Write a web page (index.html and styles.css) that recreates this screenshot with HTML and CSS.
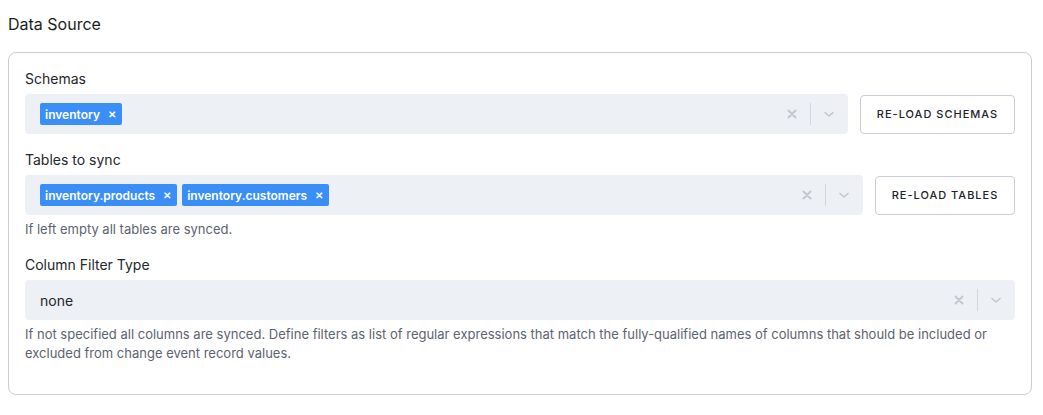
FILE: index.html
```html
<!DOCTYPE html>
<html>
<head>
<meta charset="utf-8">
<link rel="stylesheet" href="styles.css">
</head>
<body>
<div class="page">
  <h2 class="title">Data Source</h2>
  <div class="card">
    <div class="field">
      <div class="label">Schemas</div>
      <div class="row">
        <div class="select">
          <div class="values">
            <span class="tag">inventory<span class="tag-x">&#x2715;</span></span>
          </div>
          <div class="indicators">
            <span class="ind"><svg width="10" height="10" viewBox="0 0 10 10"><path d="M1.5 1.5 L8.5 8.5 M8.5 1.5 L1.5 8.5" stroke="currentColor" stroke-width="2" stroke-linecap="round"/></svg></span>
            <span class="sep"></span>
            <span class="ind"><svg width="12" height="8" viewBox="0 0 12 8"><path d="M2 2.5 L6 6 L10 2.5" stroke="currentColor" stroke-width="1.6" fill="none" stroke-linecap="round" stroke-linejoin="round"/></svg></span>
          </div>
        </div>
        <button class="btn btn-schemas">RE-LOAD SCHEMAS</button>
      </div>
    </div>
    <div class="field">
      <div class="label">Tables to sync</div>
      <div class="row">
        <div class="select">
          <div class="values">
            <span class="tag">inventory.products<span class="tag-x">&#x2715;</span></span>
            <span class="tag">inventory.customers<span class="tag-x">&#x2715;</span></span>
          </div>
          <div class="indicators">
            <span class="ind"><svg width="10" height="10" viewBox="0 0 10 10"><path d="M1.5 1.5 L8.5 8.5 M8.5 1.5 L1.5 8.5" stroke="currentColor" stroke-width="2" stroke-linecap="round"/></svg></span>
            <span class="sep"></span>
            <span class="ind"><svg width="12" height="8" viewBox="0 0 12 8"><path d="M2 2.5 L6 6 L10 2.5" stroke="currentColor" stroke-width="1.6" fill="none" stroke-linecap="round" stroke-linejoin="round"/></svg></span>
          </div>
        </div>
        <button class="btn btn-tables">RE-LOAD TABLES</button>
      </div>
      <div class="help">If left empty all tables are synced.</div>
    </div>
    <div class="field">
      <div class="label">Column Filter Type</div>
      <div class="select">
        <div class="values">
          <span class="value">none</span>
        </div>
        <div class="indicators">
          <span class="ind"><svg width="10" height="10" viewBox="0 0 10 10"><path d="M1.5 1.5 L8.5 8.5 M8.5 1.5 L1.5 8.5" stroke="currentColor" stroke-width="2" stroke-linecap="round"/></svg></span>
          <span class="sep"></span>
          <span class="ind"><svg width="12" height="8" viewBox="0 0 12 8"><path d="M2 2.5 L6 6 L10 2.5" stroke="currentColor" stroke-width="1.6" fill="none" stroke-linecap="round" stroke-linejoin="round"/></svg></span>
        </div>
      </div>
      <div class="help">If not specified all columns are synced. Define filters as list of regular expressions that match the fully-qualified names of columns that should be included or excluded from change event record values.</div>
    </div>
  </div>
</div>
</body>
</html>
```
FILE: styles.css
```css
* { box-sizing: border-box; }
html, body { margin: 0; padding: 0; background: #ffffff; }
body {
  font-family: Inter, "Noto Sans", sans-serif;
  color: #1f2328;
}
.page {
  padding: 12px 11px 0 8px;
}
.title {
  margin: 0 0 16px 0;
  font-size: 16px;
  font-weight: 400;
  line-height: 24px;
  color: #1a1d21;
}
.card {
  border: 1px solid #c9cdd8;
  border-radius: 8px;
  padding: 16px 16px 16px 16px;
  height: 343px;
}
.field {
  margin-bottom: 16px;
}
.label {
  font-size: 14px;
  line-height: 20px;
  margin-bottom: 5px;
  color: #23262b;
}
.row {
  display: flex;
  gap: 12px;
  align-items: center;
}
.select {
  flex: 1;
  height: 40px;
  background: #edf0f4;
  border-radius: 4px;
  display: flex;
  align-items: center;
  padding-left: 15px;
  padding-right: 1px;
}
.values {
  flex: 1;
  display: flex;
  gap: 5px;
  align-items: center;
}
.tag {
  display: inline-flex;
  align-items: center;
  height: 22px;
  padding: 0 6px 0 5px;
  background: #3a8ef7;
  color: #ffffff;
  font-size: 12px;
  font-weight: 600;
  border-radius: 2px;
}
.tag-x {
  font-size: 10px;
  font-weight: 700;
  margin-left: 8px;
}
.value {
  font-size: 14px;
  color: #23262b;
}
.indicators {
  display: flex;
  align-items: center;
}
.ind {
  width: 36px;
  height: 24px;
  display: flex;
  align-items: center;
  justify-content: center;
  color: #c4c7cd;
}
.sep {
  width: 1px;
  height: 22px;
  background: #d3d6dc;
}
.btn {
  flex-shrink: 0;
  white-space: nowrap;
  height: 39px;
  background: #ffffff;
  border: 1px solid #c9cdd8;
  border-radius: 4px;
  font-family: Inter, "Noto Sans", sans-serif;
  font-size: 11px;
  font-weight: 500;
  letter-spacing: 1px;
  color: #202328;
  padding: 0;
  text-align: center;
}
.btn-schemas { width: 155px; }
.btn-tables { width: 140px; }
.help {
  margin-top: 5px;
  font-size: 13px;
  line-height: 19px;
  color: #5c6370;
}
```
